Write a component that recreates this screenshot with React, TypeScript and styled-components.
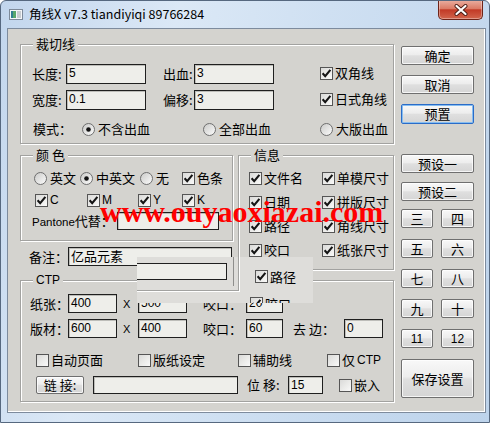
import React from "react";
import styled, { createGlobalStyle } from "styled-components";

const CJK = `"Noto Sans CJK SC", "Noto Sans", sans-serif`;
const SANS = `"Liberation Sans", "Noto Sans CJK SC", Arial, sans-serif`;
const FACE = "#d4d3cf";

const GlobalStyle = createGlobalStyle`
  html, body { margin: 0; padding: 0; background: #ffffff; }
  body { font-family: ${CJK}; color: #000; }
  * { box-sizing: border-box; }
`;

const Window = styled.div`
  position: relative;
  width: 490px;
  height: 423px;
  border: 1px solid #56687f;
  border-radius: 6px 6px 0 0;
  background: linear-gradient(105deg, #c2d6ed 0%, #dbe8f6 30%, #cfe0f2 55%, #bdd3eb 100%);
  overflow: hidden;
`;

const TitleBar = styled.div`
  display: flex;
  align-items: flex-start;
  height: 27px;
  padding-left: 8px;
`;

const AppIcon = styled.svg`
  margin-top: 8px;
  flex: none;
`;

const Title = styled.div`
  margin-left: 6px;
  font-family: ${CJK};
  font-size: 12.5px;
  line-height: 26px;
  color: #000;
  white-space: nowrap;
`;

const CloseBtn = styled.div`
  margin-left: auto;
  margin-right: 6px;
  margin-top: -1px;
  width: 45px;
  height: 20px;
  display: flex;
  align-items: center;
  justify-content: center;
  border: 1px solid #6e2418;
  border-top: none;
  border-radius: 0 0 5px 5px;
  background: linear-gradient(#eab0a2 0%, #db7b66 45%, #c23a26 52%, #d2654c 100%);
  box-shadow: inset 0 0 0 1px rgba(255, 255, 255, 0.35);
`;

const Client = styled.div`
  margin-left: 6px;
  width: 479px;
  height: 385px;
  display: flex;
  padding: 15px 0 0 12px;
  background: ${FACE};
  border: 1px solid #7d8b9d;
  box-shadow: inset -1px -1px 0 #ffffff;
  font-family: ${CJK};
  font-size: 13px;
`;

const LeftCol = styled.div`
  width: 374px;
  display: flex;
  flex-direction: column;
`;

const Group = styled.div<{ $h: number; $w?: number; $pad: string; $mt?: number; $ml?: number }>`
  position: relative;
  height: ${(p) => p.$h}px;
  width: ${(p) => (p.$w ? `${p.$w}px` : "auto")};
  margin-top: ${(p) => p.$mt ?? 0}px;
  margin-left: ${(p) => p.$ml ?? 0}px;
  padding: ${(p) => p.$pad};
  border: 1px solid #a2a2a0;
  box-shadow: inset 1px 1px 0 #ffffff, 1px 1px 0 #ffffff;
  flex: none;
`;

const Legend = styled.div<{ $latin?: boolean }>`
  position: absolute;
  top: -9px;
  left: 12px;
  padding: 0 3px;
  background: ${FACE};
  line-height: 16px;
  font-family: ${(p) => (p.$latin ? SANS : CJK)};
  font-size: ${(p) => (p.$latin ? 12 : 13)}px;
  white-space: pre;
`;

const CutGrid = styled.div`
  display: grid;
  grid-template-columns: 34px 80px 48px 80px 46px auto;
  grid-auto-rows: 20px;
  row-gap: 6px;
  align-items: center;
`;

const CheckSlot = styled.div`
  grid-column: 6;
`;

const Label = styled.div<{ $w: number; $pl?: number }>`
  width: ${(p) => p.$w}px;
  padding-left: ${(p) => p.$pl ?? 0}px;
  flex: none;
  line-height: 16px;
  white-space: pre;
`;

const Latin = styled.span<{ $fs?: number }>`
  font-family: ${SANS};
  font-size: ${(p) => p.$fs ?? 12}px;
`;

const Field = styled.div<{ $w: number; $h?: number; $ml?: number; $fs?: number }>`
  width: ${(p) => p.$w}px;
  height: ${(p) => p.$h ?? 20}px;
  margin-left: ${(p) => p.$ml ?? 0}px;
  flex: none;
  padding: 1px 0 0 2px;
  border: 1px solid #1f1f1f;
  background: #eeeeea;
  box-shadow: inset 1px 1px 0 #bdbdb9;
  font-family: ${SANS};
  font-size: ${(p) => p.$fs ?? 12}px;
  line-height: 15px;
  white-space: nowrap;
  overflow: hidden;
`;

const Row = styled.div<{ $h?: number; $mt?: number; $pl?: number }>`
  display: flex;
  align-items: center;
  height: ${(p) => p.$h ?? 16}px;
  margin-top: ${(p) => p.$mt ?? 0}px;
  padding-left: ${(p) => p.$pl ?? 0}px;
`;

const OptItem = styled.div<{ $w?: number; $ml?: number; $gap: number }>`
  display: inline-flex;
  align-items: center;
  gap: ${(p) => p.$gap}px;
  height: 16px;
  width: ${(p) => (p.$w ? `${p.$w}px` : "auto")};
  margin-left: ${(p) => p.$ml ?? 0}px;
  flex: none;
  line-height: 16px;
  white-space: nowrap;
  svg {
    flex: none;
  }
`;

const MidRow = styled.div`
  display: flex;
  margin-top: 11px;
`;

const LeftSub = styled.div`
  width: 213px;
  display: flex;
  flex-direction: column;
`;

const InfoGrid = styled.div`
  display: grid;
  grid-template-columns: 73px auto;
  grid-auto-rows: 16px;
  row-gap: 8px;
`;

const RightCol = styled.div`
  width: 73px;
  margin-left: 7px;
  padding-top: 2px;
  display: flex;
  flex-direction: column;
`;

const Stack = styled.div<{ $gap: number; $mt?: number }>`
  display: flex;
  flex-direction: column;
  gap: ${(p) => p.$gap}px;
  margin-top: ${(p) => p.$mt ?? 0}px;
`;

const NumGrid = styled.div`
  display: grid;
  grid-template-columns: 32px 33px;
  column-gap: 8px;
  row-gap: 11px;
  margin-top: 8px;
`;

const Btn = styled.div<{ $w?: number; $h?: number; $focus?: boolean; $mt?: number }>`
  width: ${(p) => (p.$w ? `${p.$w}px` : "100%")};
  height: ${(p) => p.$h ?? 19}px;
  margin-top: ${(p) => p.$mt ?? 0}px;
  flex: none;
  display: flex;
  align-items: center;
  justify-content: center;
  border: 1px solid ${(p) => (p.$focus ? "#2a6cc8" : "#6f6f6f")};
  border-radius: 2px;
  background: linear-gradient(#f8f8f8 0%, #ededed 45%, #dfdfdf 52%, #d5d5d5 100%);
  box-shadow: inset 0 0 0 1px ${(p) => (p.$focus ? "#86bdf0" : "rgba(255,255,255,0.75)")};
  font-size: 13px;
  line-height: 16px;
  white-space: pre;
`;

const Watermark = styled.div`
  position: absolute;
  left: 99px;
  top: 196px;
  z-index: 3;
  font-family: "Liberation Serif", "Times New Roman", serif;
  font-weight: bold;
  font-size: 30px;
  line-height: 30px;
  color: #ff0000;
  white-space: nowrap;
  pointer-events: none;
`;

/* stale repaint left by the capture */
const Glitch = styled.div`
  position: absolute;
  left: 136px;
  top: 256px;
  width: 176px;
  height: 46px;
  z-index: 2;
  background: #deddda;
  overflow: hidden;
  font-family: ${CJK};
  font-size: 13px;
`;

const GhostFrame = styled.div`
  position: absolute;
  left: -20px;
  top: -20px;
  width: 122px;
  height: 54px;
  border-right: 1px solid #a2a2a0;
  border-bottom: 1px solid #a2a2a0;
  box-shadow: 1px 1px 0 #ffffff;
`;

const GhostLine = styled.div`
  position: absolute;
  left: 96px;
  top: 0;
  width: 1px;
  height: 29px;
  background: #8e8e8c;
`;

const GhostField = styled.div`
  position: absolute;
  left: -4px;
  top: 6px;
  width: 94px;
  height: 17px;
  border: 1px solid #1f1f1f;
  background: #eeeeea;
`;

const GhostItem = styled.div<{ $x: number; $y: number }>`
  position: absolute;
  left: ${(p) => p.$x}px;
  top: ${(p) => p.$y}px;
`;

const CheckIcon = ({ checked }: { checked?: boolean }) => (
  <svg width="13" height="13" viewBox="0 0 13 13">
    <defs>
      <linearGradient id="cbfill" x1="0" y1="0" x2="1" y2="1">
        <stop offset="0" stopColor="#d9d9d7" />
        <stop offset="1" stopColor="#fbfbfa" />
      </linearGradient>
    </defs>
    <rect x="0.5" y="0.5" width="12" height="12" fill="url(#cbfill)" stroke="#555" />
    {checked && (
      <path d="M2.6 6.2 L5.2 9.2 L10.4 2.8" fill="none" stroke="#151515" strokeWidth="2.1" />
    )}
  </svg>
);

const RadioIcon = ({ checked }: { checked?: boolean }) => (
  <svg width="13" height="13" viewBox="0 0 13 13">
    <defs>
      <linearGradient id="rbfill" x1="0" y1="0" x2="1" y2="1">
        <stop offset="0" stopColor="#c9c9c7" />
        <stop offset="1" stopColor="#fdfdfd" />
      </linearGradient>
    </defs>
    <circle cx="6.5" cy="6.5" r="6" fill="url(#rbfill)" stroke="#6e6e6e" />
    {checked && <circle cx="6.5" cy="6.5" r="2.3" fill="#111" />}
  </svg>
);

type OptProps = { checked?: boolean; w?: number; ml?: number; children?: React.ReactNode };

const Check = ({ checked = true, w, ml, children }: OptProps) => (
  <OptItem $w={w} $ml={ml} $gap={2}>
    <CheckIcon checked={checked} />
    {children}
  </OptItem>
);

const Radio = ({ checked = false, w, ml, children }: OptProps) => (
  <OptItem $w={w} $ml={ml} $gap={3}>
    <RadioIcon checked={checked} />
    {children}
  </OptItem>
);

export default function App() {
  return (
    <>
      <GlobalStyle />
      <Window>
        <TitleBar>
          <AppIcon width="14" height="11" viewBox="0 0 14 11">
            <rect x="0.5" y="0.5" width="13" height="10" fill="#f4f6f8" stroke="#7d8a99" />
            <rect x="2" y="2" width="2" height="7" fill="#2f7f8f" />
            <rect x="4" y="2" width="3" height="7" fill="#59a86a" />
            <rect x="8" y="2" width="4" height="7" fill="#c8ccd0" />
          </AppIcon>
          <Title>角线X v7.3 tiandiyiqi 89766284</Title>
          <CloseBtn>
            <svg width="14" height="12" viewBox="0 0 14 12">
              <path d="M2.5 2 L11.5 10 M11.5 2 L2.5 10" stroke="#4a1c14" strokeWidth="4" strokeLinecap="round" />
              <path d="M2.5 2 L11.5 10 M11.5 2 L2.5 10" stroke="#ffffff" strokeWidth="2.2" strokeLinecap="round" />
            </svg>
          </CloseBtn>
        </TitleBar>

        <Client>
          <LeftCol>
            <Group $h={100} $pad="19px 0 0 11px">
              <Legend>裁切线</Legend>
              <CutGrid>
                <Label $w={34}>长度:</Label>
                <Field $w={80}>5</Field>
                <Label $w={48} $pl={17}>出血:</Label>
                <Field $w={80}>3</Field>
                <CheckSlot>
                  <Check>双角线</Check>
                </CheckSlot>
                <Label $w={34}>宽度:</Label>
                <Field $w={80}>0.1</Field>
                <Label $w={48} $pl={17}>偏移:</Label>
                <Field $w={80}>3</Field>
                <CheckSlot>
                  <Check>日式角线</Check>
                </CheckSlot>
              </CutGrid>
              <Row $mt={11} $pl={1}>
                <Label $w={49}>模式：</Label>
                <Radio w={121} checked>不含出血</Radio>
                <Radio w={117}>全部出血</Radio>
                <Radio>大版出血</Radio>
              </Row>
            </Group>

            <MidRow>
              <LeftSub>
                <Group $h={86} $pad="14px 0 0 11px">
                  <Legend>颜 色</Legend>
                  <Row $pl={2}>
                    <Radio w={46}>英文</Radio>
                    <Radio w={60} checked>中英文</Radio>
                    <Radio w={42}>无</Radio>
                    <Check>色条</Check>
                  </Row>
                  <Row $mt={6} $pl={3}>
                    <Check w={52}>
                      <Latin>C</Latin>
                    </Check>
                    <Check w={51}>
                      <Latin>M</Latin>
                    </Check>
                    <Check w={44}>
                      <Latin>Y</Latin>
                    </Check>
                    <Check>
                      <Latin>K</Latin>
                    </Check>
                  </Row>
                  <Row $h={18} $mt={4}>
                    <Label $w={85}>
                      <Latin $fs={11.5}>Pantone</Latin>代替：
                    </Label>
                    <Field $w={102} $h={18} />
                  </Row>
                </Group>
                <Row $h={19} $mt={6} $pl={9}>
                  <Label $w={39}>备注：</Label>
                  <Field $w={164} $h={19} $fs={13}>
                    亿品元素
                  </Field>
                </Row>
              </LeftSub>

              <Group $h={115} $w={156} $pad="14px 0 0 10px" $ml={5}>
                <Legend>信息</Legend>
                <InfoGrid>
                  <Check>文件名</Check>
                  <Check>单模尺寸</Check>
                  <Check>日期</Check>
                  <Check>拼版尺寸</Check>
                  <Check>路径</Check>
                  <Check>角线尺寸</Check>
                  <Check>咬口</Check>
                  <Check>纸张尺寸</Check>
                </InfoGrid>
              </Group>
            </MidRow>

            <Group $h={122} $pad="13px 0 0 9px" $mt={10}>
              <Legend $latin>CTP</Legend>
              <Row $h={19}>
                <Label $w={38}>纸张：</Label>
                <Field $w={49} $h={19}>400</Field>
                <Label $w={21} $pl={6}>
                  <Latin $fs={11}>X</Latin>
                </Label>
                <Field $w={49} $h={19}>500</Field>
                <Label $w={59} $pl={16}>咬口：</Label>
                <Field $w={37} $h={19}>20</Field>
              </Row>
              <Row $h={19} $mt={6}>
                <Label $w={38}>版材：</Label>
                <Field $w={49} $h={19}>600</Field>
                <Label $w={21} $pl={6}>
                  <Latin $fs={11}>X</Latin>
                </Label>
                <Field $w={49} $h={19}>400</Field>
                <Label $w={59} $pl={16}>咬口：</Label>
                <Field $w={37} $h={19}>60</Field>
                <Label $w={61} $pl={10}>去 边：</Label>
                <Field $w={39} $h={19}>0</Field>
              </Row>
              <Row $mt={14} $pl={6}>
                <Check w={102} checked={false}>自动页面</Check>
                <Check w={100} checked={false}>版纸设定</Check>
                <Check w={89} checked={false}>辅助线</Check>
                <Check checked={false}>
                  仅 <Latin>CTP</Latin>
                </Check>
              </Row>
              <Row $h={18} $mt={8} $pl={6}>
                <Btn $w={48} $h={18}>链 接:</Btn>
                <Field $w={145} $h={18} $ml={9} />
                <Label $w={50} $pl={9}>位 移:</Label>
                <Field $w={35} $h={18}>15</Field>
                <Check ml={16} checked={false}>嵌入</Check>
              </Row>
            </Group>
          </LeftCol>

          <RightCol>
            <Stack $gap={10}>
              <Btn>确定</Btn>
              <Btn>取消</Btn>
              <Btn $h={20} $focus>预置</Btn>
            </Stack>
            <Stack $gap={9} $mt={30}>
              <Btn>预设一</Btn>
              <Btn>预设二</Btn>
            </Stack>
            <NumGrid>
              <Btn>三</Btn>
              <Btn>四</Btn>
              <Btn>五</Btn>
              <Btn>六</Btn>
              <Btn>七</Btn>
              <Btn>八</Btn>
              <Btn>九</Btn>
              <Btn>十</Btn>
              <Btn>
                <Latin>11</Latin>
              </Btn>
              <Btn>
                <Latin>12</Latin>
              </Btn>
            </NumGrid>
            <Btn $h={39} $mt={11}>保存设置</Btn>
          </RightCol>
        </Client>

        <Glitch>
          <GhostFrame />
          <GhostLine />
          <GhostField />
          <GhostItem $x={118} $y={11}>
            <Check>路径</Check>
          </GhostItem>
          <GhostItem $x={113} $y={38}>
            <Check>咬口</Check>
          </GhostItem>
        </Glitch>

        <Watermark>www.ouyaoxiazai.com</Watermark>
      </Window>
    </>
  );
}
